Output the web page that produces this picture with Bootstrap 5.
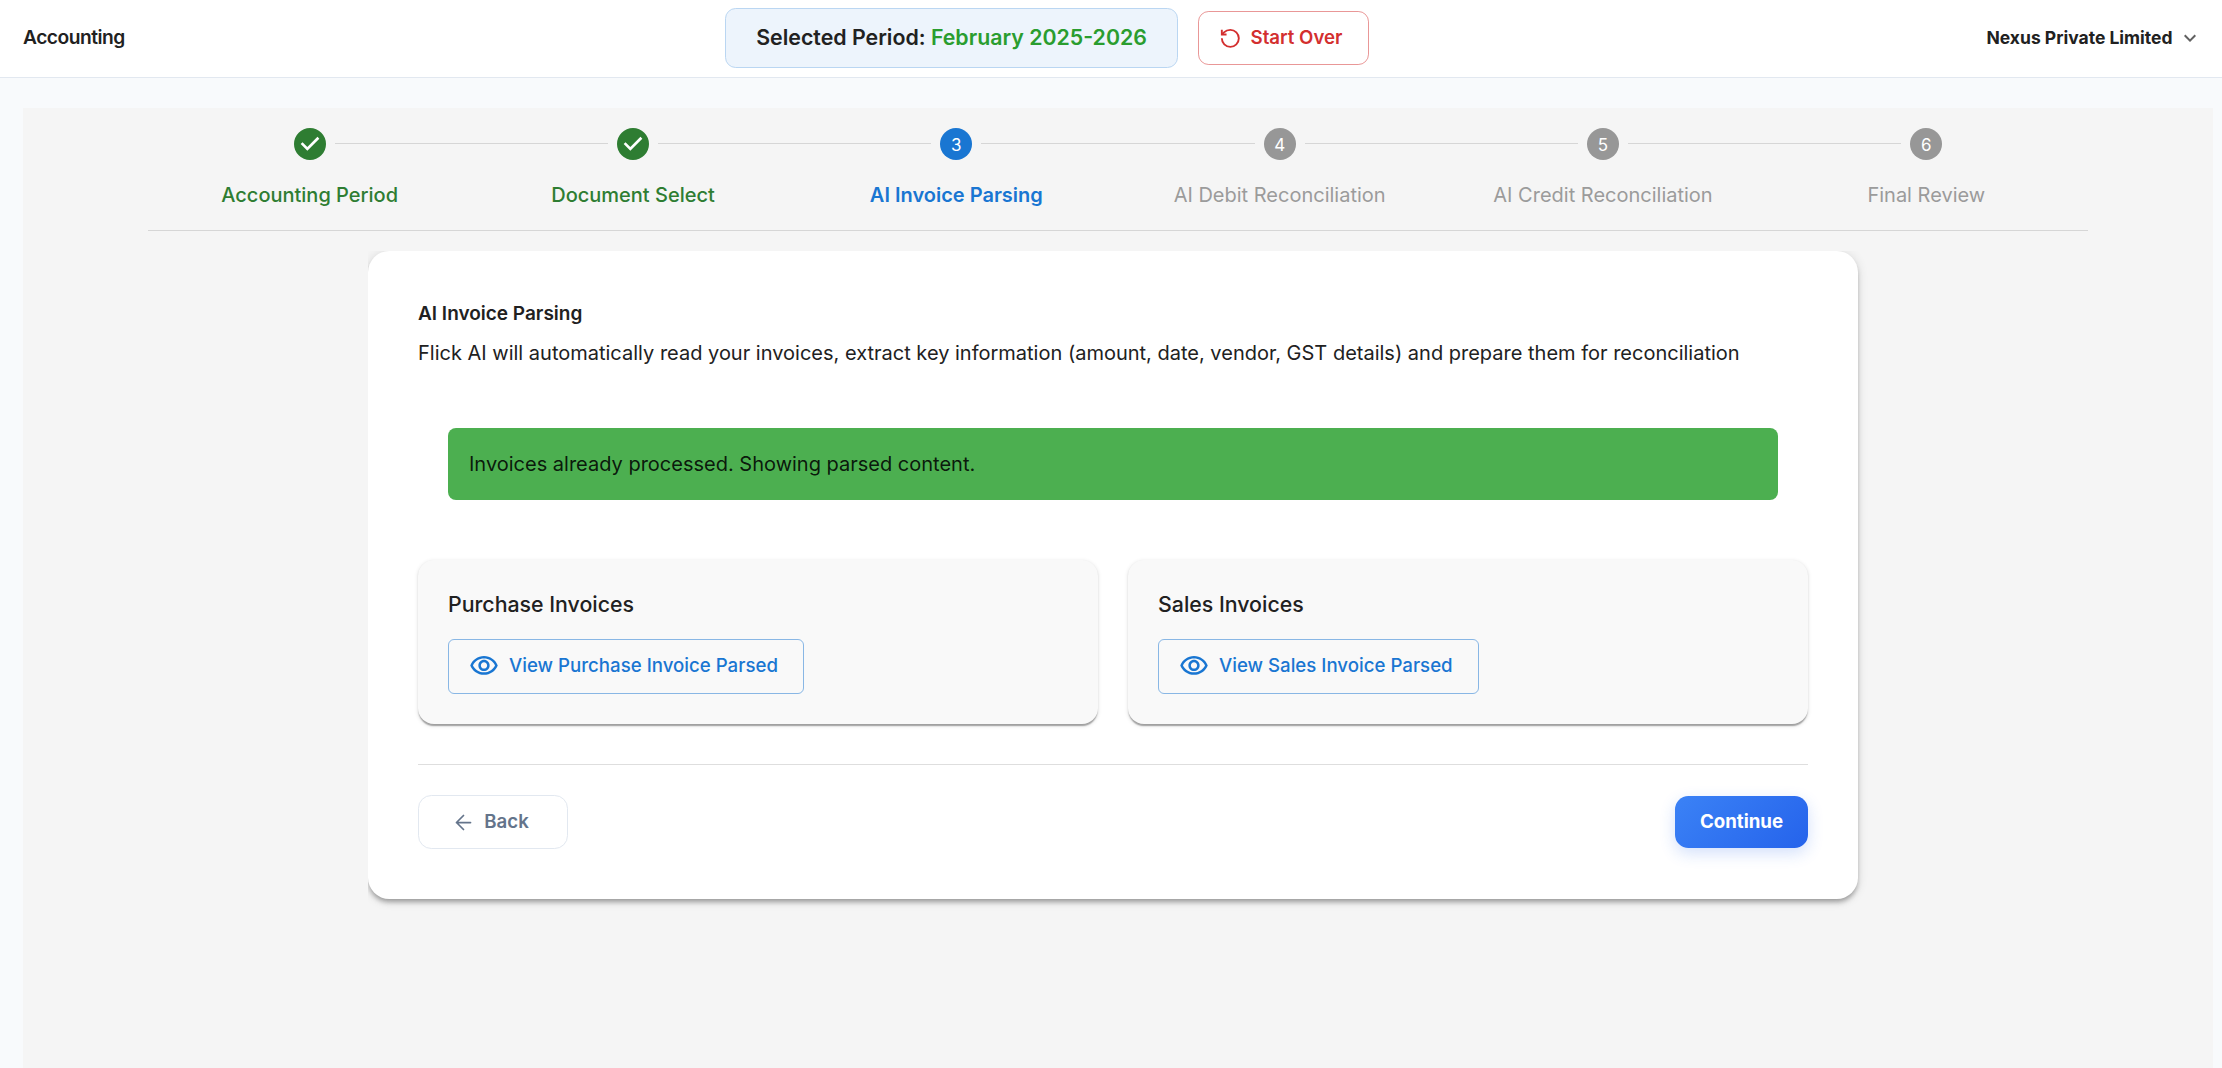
<!DOCTYPE html>
<html lang="en">
<head>
<meta charset="utf-8">
<meta name="viewport" content="width=device-width, initial-scale=1">
<title>Accounting</title>
<link href="https://cdn.jsdelivr.net/npm/bootstrap@5.3.0/dist/css/bootstrap.min.css" rel="stylesheet">
<style>
body{font-family:Inter,"Liberation Sans",sans-serif;font-size:20px;line-height:1.5;color:#212121;background:#f8fafc;height:100vh;overflow:hidden}
.topbar{height:78px;padding:0 20.5px 1px 23px;border-bottom:1px solid #e2e8f0}
.app-title{font-size:19.2px;font-weight:600;letter-spacing:-.5px;padding-bottom:2px}
.period-chip{height:60px;padding:0 30px;font-size:21.333px;font-weight:600;background:#edf4fc;border:1px solid #bad6f2;border-radius:10.67px}
.period-value{color:#2a9d2f}
.btn-restart{--bs-btn-color:#d32f2f;--bs-btn-border-color:rgba(211,47,47,.5);width:171px;height:54px;padding:0 0 0 20px;font-size:18.667px;font-weight:600;border-radius:10.67px;gap:9px}
.org-menu{font-size:17.5px;font-weight:700;padding:0 0 0 17px;border:0;gap:5px;color:#212121}
.workspace{flex:1;margin:30px 9px 0 23px;background:#f5f5f5;padding-top:20px}
.stepper{width:1940px;height:103px;border-bottom:1px solid #d6d6d6}
.step-line{height:1px;background:#d6d6d6;flex:1;margin-bottom:1px}
.step-line.blank{background:transparent}
.step-dot{width:32px;height:32px;border-radius:50%;background:#979797;color:#fff;font-size:17px;margin:0 9px;padding-top:2px;line-height:1}
.step-label{margin-top:20px;color:#9b9b9b}
.done .step-dot{background:none;padding:0}
.done .step-label{color:#2e7d32;font-weight:500}
.current .step-dot{background:#1976d2}
.current .step-label{color:#1976d2;font-weight:600}
/* the panel's shadow is cut along its top and left edges */
.panel-clip{width:1490px;margin:20px 0 0 345px;clip-path:inset(0 -30px -30px 0)}
.panel{height:648px;padding:49px 50px 0;background:#fff;border-radius:21.33px;box-shadow:0 4px 4px -2.67px rgba(0,0,0,.2),0 4px 5.33px rgba(0,0,0,.14),0 1.33px 10.67px rgba(0,0,0,.12)}
.panel-title{font-size:19px;font-weight:600;line-height:28px;margin:0 0 10px}
.done-note{height:72px;margin:60px 30px;padding:0 21px;background:#4caf50;color:rgba(0,0,0,.87);border-radius:8px}
.invoice-box{background:#f9f9f9;height:164px;padding:30px;border-radius:16px;box-shadow:0 2.67px 1.33px -1.33px rgba(0,0,0,.2),0 1.33px 1.33px rgba(0,0,0,.14),0 1.33px 4px rgba(0,0,0,.12)}
.invoice-box h2{font-size:21.333px;font-weight:500;line-height:28px;margin:0 0 21px}
.btn-view{--bs-btn-color:#1976d2;--bs-btn-border-color:rgba(25,118,210,.5);font-size:18.667px;font-weight:500;height:55px;padding:0 25px 1px 20px;border-radius:6px;gap:10px}
.invoice-row{gap:30px}
.actions{margin-top:40px;padding-top:30px;border-top:1px solid #dedede}
.btn-back{--bs-btn-color:#64748b;--bs-btn-border-color:#e2e8f0;width:150px;height:54px;font-size:18.667px;font-weight:600;border-radius:13.33px;gap:10px;padding:0 4px 0 0}
.btn-next{width:133px;height:52px;padding:0;border:0;color:#fff;font-size:18.667px;font-weight:700;border-radius:13.33px;background:linear-gradient(135deg,#3b82f6,#2563eb);box-shadow:0 5.33px 16px rgba(37,99,235,.2)}
</style>
<script src="https://cdn.jsdelivr.net/npm/bootstrap@5.3.0/dist/js/bootstrap.bundle.min.js"></script>
</head>
<body class="d-flex flex-column">
<header class="topbar bg-white d-flex align-items-center justify-content-between">
  <div class="app-title">Accounting</div>
  <div class="d-flex align-items-center" style="gap:20px">
    <div class="period-chip d-flex align-items-center"><span>Selected Period: <span class="period-value">February 2025-2026</span></span></div>
    <button class="btn btn-restart d-flex align-items-center">
      <svg width="22.67" height="22.67" viewBox="0 0 24 24" fill="none" stroke="currentColor" stroke-width="2"><path d="M3 12a9 9 0 1 0 9-9 9.75 9.75 0 0 0-6.74 2.74L3 8"/><path d="M3 3v5h5"/></svg>
      Start Over
    </button>
  </div>
  <button class="btn org-menu d-flex align-items-center">Nexus Private Limited
    <svg width="24" height="24" viewBox="0 0 24 24" fill="#616161"><path d="M7.41 8.59 12 13.17l4.59-4.58L18 10l-6 6-6-6z"/></svg>
  </button>
</header>
<main class="workspace">
  <div class="stepper d-flex mx-auto">
    <div class="col-2 text-center done">
      <div class="d-flex align-items-center"><span class="step-line blank"></span><span class="step-dot"><svg class="d-block" width="32" height="32" viewBox="0 0 24 24" fill="#2e7d32"><circle cx="12" cy="12" r="11" fill="#fff"/><path fill-rule="evenodd" d="M12 0a12 12 0 1 0 0 24 12 12 0 0 0 0-24zm-2 17-5-5 1.4-1.4 3.6 3.6 7.6-7.6L19 8l-9 9z"/></svg></span><span class="step-line"></span></div>
      <div class="step-label">Accounting Period</div>
    </div>
    <div class="col-2 text-center done">
      <div class="d-flex align-items-center"><span class="step-line"></span><span class="step-dot"><svg class="d-block" width="32" height="32" viewBox="0 0 24 24" fill="#2e7d32"><circle cx="12" cy="12" r="11" fill="#fff"/><path fill-rule="evenodd" d="M12 0a12 12 0 1 0 0 24 12 12 0 0 0 0-24zm-2 17-5-5 1.4-1.4 3.6 3.6 7.6-7.6L19 8l-9 9z"/></svg></span><span class="step-line"></span></div>
      <div class="step-label">Document Select</div>
    </div>
    <div class="col-2 text-center current">
      <div class="d-flex align-items-center"><span class="step-line"></span><span class="step-dot d-flex align-items-center justify-content-center">3</span><span class="step-line"></span></div>
      <div class="step-label">AI Invoice Parsing</div>
    </div>
    <div class="col-2 text-center">
      <div class="d-flex align-items-center"><span class="step-line"></span><span class="step-dot d-flex align-items-center justify-content-center">4</span><span class="step-line"></span></div>
      <div class="step-label">AI Debit Reconciliation</div>
    </div>
    <div class="col-2 text-center">
      <div class="d-flex align-items-center"><span class="step-line"></span><span class="step-dot d-flex align-items-center justify-content-center">5</span><span class="step-line"></span></div>
      <div class="step-label">AI Credit Reconciliation</div>
    </div>
    <div class="col-2 text-center">
      <div class="d-flex align-items-center"><span class="step-line"></span><span class="step-dot d-flex align-items-center justify-content-center">6</span><span class="step-line blank"></span></div>
      <div class="step-label">Final Review</div>
    </div>
  </div>
  <div class="panel-clip">
    <section class="panel">
      <h1 class="panel-title">AI Invoice Parsing</h1>
      <p class="mb-0">Flick AI will automatically read your invoices, extract key information (amount, date, vendor, GST details) and prepare them for reconciliation</p>
      <div class="done-note d-flex align-items-center">Invoices already processed. Showing parsed content.</div>
      <div class="invoice-row d-flex">
        <div class="invoice-box flex-fill w-50">
          <h2>Purchase Invoices</h2>
          <button class="btn btn-view d-inline-flex align-items-center">
            <svg width="30" height="30" viewBox="0 0 24 24" fill="currentColor"><path d="M12 6c3.79 0 7.17 2.13 8.82 5.5C19.17 14.87 15.79 17 12 17s-7.17-2.13-8.82-5.5C4.83 8.13 8.21 6 12 6m0-2C7 4 2.73 7.11 1 11.5 2.73 15.89 7 19 12 19s9.27-3.11 11-7.5C21.27 7.11 17 4 12 4m0 5c1.38 0 2.5 1.12 2.5 2.5S13.38 14 12 14s-2.5-1.12-2.5-2.5S10.62 9 12 9m0-2c-2.48 0-4.5 2.02-4.5 4.5S9.52 16 12 16s4.5-2.02 4.5-4.5S14.48 7 12 7"/></svg>
            View Purchase Invoice Parsed</button>
        </div>
        <div class="invoice-box flex-fill w-50">
          <h2>Sales Invoices</h2>
          <button class="btn btn-view d-inline-flex align-items-center">
            <svg width="30" height="30" viewBox="0 0 24 24" fill="currentColor"><path d="M12 6c3.79 0 7.17 2.13 8.82 5.5C19.17 14.87 15.79 17 12 17s-7.17-2.13-8.82-5.5C4.83 8.13 8.21 6 12 6m0-2C7 4 2.73 7.11 1 11.5 2.73 15.89 7 19 12 19s9.27-3.11 11-7.5C21.27 7.11 17 4 12 4m0 5c1.38 0 2.5 1.12 2.5 2.5S13.38 14 12 14s-2.5-1.12-2.5-2.5S10.62 9 12 9m0-2c-2.48 0-4.5 2.02-4.5 4.5S9.52 16 12 16s4.5-2.02 4.5-4.5S14.48 7 12 7"/></svg>
            View Sales Invoice Parsed</button>
        </div>
      </div>
      <div class="actions d-flex justify-content-between align-items-center">
        <button class="btn btn-back d-flex align-items-center justify-content-center">
          <svg width="21" height="21" viewBox="0 0 24 24" fill="none" stroke="currentColor" stroke-width="2" stroke-linecap="round" stroke-linejoin="round"><path d="m12 20-8-8 8-8M4 12h16"/></svg>
          Back</button>
        <button class="btn btn-next">Continue</button>
      </div>
    </section>
  </div>
</main>
</body>
</html>
